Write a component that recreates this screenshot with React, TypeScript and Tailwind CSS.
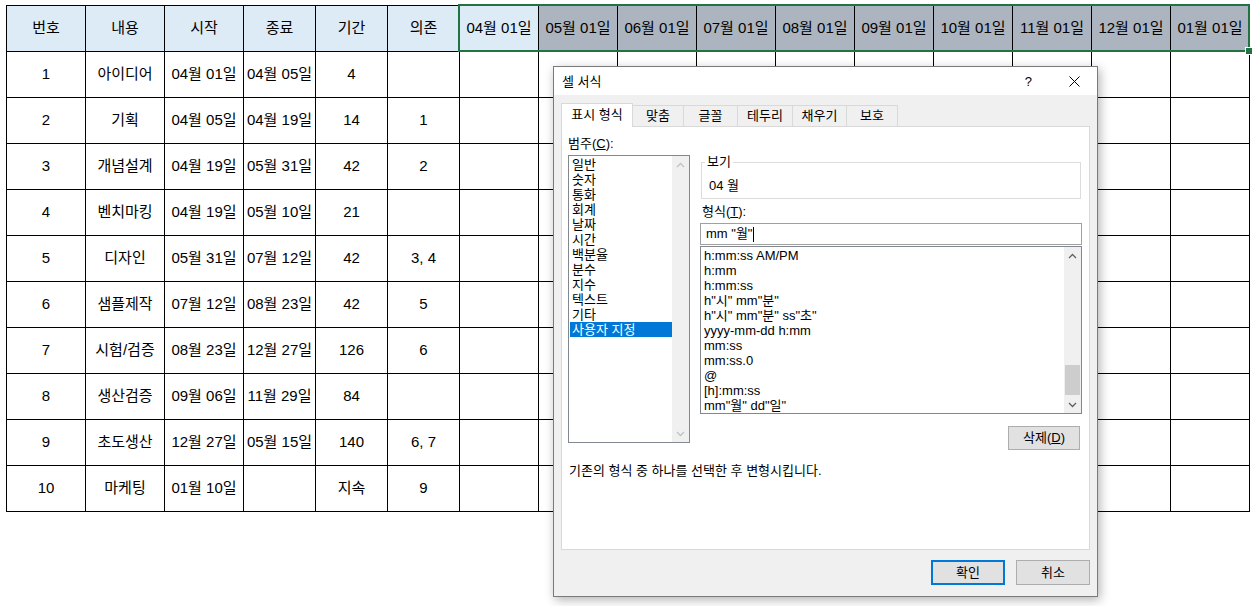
import React from 'react';

const sheetFont = { fontFamily: '"Liberation Sans", "Noto Sans CJK KR", sans-serif' };

const leftCols = ['w-[79px]', 'w-[79px]', 'w-[79px]', 'w-[72px]', 'w-[72px]', 'w-[72px]'];
const headers = ['번호', '내용', '시작', '종료', '기간', '의존'];
const months = [
  '04월 01일',
  '05월 01일',
  '06월 01일',
  '07월 01일',
  '08월 01일',
  '09월 01일',
  '10월 01일',
  '11월 01일',
  '12월 01일',
  '01월 01일',
];

const rows = [
  ['1', '아이디어', '04월 01일', '04월 05일', '4', ''],
  ['2', '기획', '04월 05일', '04월 19일', '14', '1'],
  ['3', '개념설계', '04월 19일', '05월 31일', '42', '2'],
  ['4', '벤치마킹', '04월 19일', '05월 10일', '21', ''],
  ['5', '디자인', '05월 31일', '07월 12일', '42', '3, 4'],
  ['6', '샘플제작', '07월 12일', '08월 23일', '42', '5'],
  ['7', '시험/검증', '08월 23일', '12월 27일', '126', '6'],
  ['8', '생산검증', '09월 06일', '11월 29일', '84', ''],
  ['9', '초도생산', '12월 27일', '05월 15일', '140', '6, 7'],
  ['10', '마케팅', '01월 10일', '', '지속', '9'],
];

const categories = ['일반', '숫자', '통화', '회계', '날짜', '시간', '백분율', '분수', '지수', '텍스트', '기타', '사용자 지정'];

const formats = [
  'h:mm:ss AM/PM',
  'h:mm',
  'h:mm:ss',
  'h"시" mm"분"',
  'h"시" mm"분" ss"초"',
  'yyyy-mm-dd h:mm',
  'mm:ss',
  'mm:ss.0',
  '@',
  '[h]:mm:ss',
  'mm"월" dd"일"',
];

const tabs = [
  { label: '표시 형식', w: 'w-[72px]' },
  { label: '맞춤', w: 'w-[51px]' },
  { label: '글꼴', w: 'w-[54px]' },
  { label: '테두리', w: 'w-[55px]' },
  { label: '채우기', w: 'w-[54px]' },
  { label: '보호', w: 'w-[51px]' },
];

function Chevron({ up, color }: { up?: boolean; color: string }) {
  return (
    <svg width="9" height="6" viewBox="0 0 9 6">
      <polyline
        points={up ? '1,5 4.5,1.5 8,5' : '1,1 4.5,4.5 8,1'}
        fill="none"
        stroke={color}
        strokeWidth="1.3"
      />
    </svg>
  );
}

function ScrollBar({ color, thumb }: { color: string; thumb?: boolean }) {
  return (
    <div className="flex w-[17px] flex-col bg-[#f0f0f0]">
      <div className="flex h-[17px] items-center justify-center">
        <Chevron up color={color} />
      </div>
      <div className="flex flex-1 flex-col justify-end">
        {thumb && <div className="mb-[1px] h-[30px] w-[17px] border-x border-[#f0f0f0] bg-[#cdcdcd]" />}
      </div>
      <div className="flex h-[17px] items-center justify-center">
        <Chevron color={color} />
      </div>
    </div>
  );
}

function Sheet() {
  return (
    <div className="pl-[6px] pt-[5px]">
      <div className="inline-flex flex-col border-l border-t border-black text-[15px] text-black">
        <div className="flex">
          {headers.map((h, i) => (
            <div
              key={h}
              className={`${leftCols[i]} flex h-[46px] items-center justify-center border-b border-r border-black bg-[#ddebf7]`}
            >
              {h}
            </div>
          ))}
          {months.map((m, i) => (
            <div
              key={m}
              className={`flex h-[46px] w-[79px] items-center justify-center border-b border-r border-black ${
                i === 0 ? 'bg-[#ddebf7]' : 'bg-[#acb5bf]'
              }`}
            >
              {m}
            </div>
          ))}
        </div>
        {rows.map((r) => (
          <div key={r[0]} className="flex">
            {r.map((c, i) => (
              <div
                key={i}
                className={`${leftCols[i]} flex h-[46px] items-center justify-center whitespace-nowrap border-b border-r border-black`}
              >
                {c}
              </div>
            ))}
            {months.map((m) => (
              <div key={m} className="h-[46px] w-[79px] border-b border-r border-black" />
            ))}
          </div>
        ))}
      </div>
    </div>
  );
}

function Dialog() {
  return (
    <div className="absolute left-[553px] top-[66px] flex h-[531px] w-[545px] flex-col border border-[#7a7a7a] bg-[#f0f0f0] text-[13px] text-black shadow-[2px_3px_10px_rgba(0,0,0,0.3)]">
      {/* title bar */}
      <div className="flex h-[28px] items-center bg-white pl-[8px] pt-[1px]">
        <span className="flex-1">셀 서식</span>
        <span className="mr-[37px] text-[13px]">?</span>
        <svg width="11" height="11" viewBox="0 0 11 11" className="mr-[17px]">
          <path d="M0.5 0.5 L10.5 10.5 M10.5 0.5 L0.5 10.5" stroke="#000" strokeWidth="1" />
        </svg>
      </div>

      <div className="flex flex-1 flex-col px-[7px] pt-[8px]">
        {/* tabs */}
        <div className="relative z-10 flex items-end">
          {tabs.map((t, i) => (
            <div
              key={t.label}
              className={`${t.w} flex items-center justify-center border-[#d9d9d9] ${
                i === 0
                  ? 'h-[24px] border-x border-t bg-white pb-[1px]'
                  : 'mb-[1px] h-[21px] border-r border-t bg-[#f0f0f0]'
              }`}
            >
              {t.label}
            </div>
          ))}
        </div>

        {/* panel */}
        <div className="-mt-[1px] flex h-[424px] flex-col border border-[#d9d9d9] bg-white pl-[6px] pt-[9px]">
          <div className="flex">
            <div className="flex w-[122px] flex-col">
              <div className="h-[15px] leading-[15px]">
                범주(<span className="underline">C</span>):
              </div>
              <div className="mt-[4px] flex h-[288px] border border-[#828790]">
                <div className="flex-1 pl-[1px] pt-[1px]">
                  {categories.map((c, i) => (
                    <div
                      key={c}
                      className={`h-[15px] pl-[2px] leading-[15px] ${
                        i === categories.length - 1 ? 'bg-[#0078d7] text-white' : ''
                      }`}
                    >
                      {c}
                    </div>
                  ))}
                </div>
                <ScrollBar color="#c2c2c2" />
              </div>
            </div>

            <div className="ml-[10px] flex w-[382px] flex-col">
              <div className="relative ml-[1px] mt-[26px] h-[37px] w-[380px] border border-[#dcdcdc] pl-[7px] pt-[15px] leading-[15px]">
                <span className="absolute -top-[9px] left-[3px] bg-white px-[2px]">보기</span>
                04 월
              </div>
              <div className="ml-[2px] mt-[5px] h-[15px] leading-[15px]">
                형식(<span className="underline">T</span>):
              </div>
              <div className="mt-[4px] flex h-[22px] items-center border border-[#a0a0a0] pl-[5px]">
                mm "월"
                <span className="ml-[1px] inline-block h-[15px] w-[1px] bg-black" />
              </div>
              <div className="mt-[1px] flex h-[168px] border border-[#828790]">
                <div className="flex-1 pl-[3px] pt-[1px]">
                  {formats.map((f) => (
                    <div key={f} className="h-[15px] whitespace-pre leading-[15px]">
                      {f}
                    </div>
                  ))}
                </div>
                <ScrollBar color="#606060" thumb />
              </div>
              <div className="mr-[2px] mt-[12px] flex h-[24px] w-[72px] items-center justify-center self-end border border-[#adadad] bg-[#e1e1e1]">
                삭제(<span className="underline">D</span>)
              </div>
            </div>
          </div>
          <div className="ml-[1px] mt-[13px] leading-[15px]">기존의 형식 중 하나를 선택한 후 변형시킵니다.</div>
        </div>

        {/* footer buttons */}
        <div className="mt-[10px] flex justify-end gap-[11px]">
          <div className="flex h-[25px] w-[74px] items-center justify-center border-2 border-[#0078d7] bg-[#e1e1e1]">
            확인
          </div>
          <div className="flex h-[25px] w-[74px] items-center justify-center border border-[#adadad] bg-[#e1e1e1]">
            취소
          </div>
        </div>
      </div>
    </div>
  );
}

export default function App() {
  return (
    <div className="relative h-[606px] w-[1259px] overflow-hidden bg-white" style={sheetFont}>
      <Sheet />
      {/* selection frame over the month header cells */}
      <div className="absolute left-[458px] top-[4px] h-[48px] w-[792px] border-2 border-[#217346]" />
      <div className="absolute left-[1245px] top-[47px] h-[8px] w-[8px] border border-white bg-[#217346]" />
      <Dialog />
    </div>
  );
}
